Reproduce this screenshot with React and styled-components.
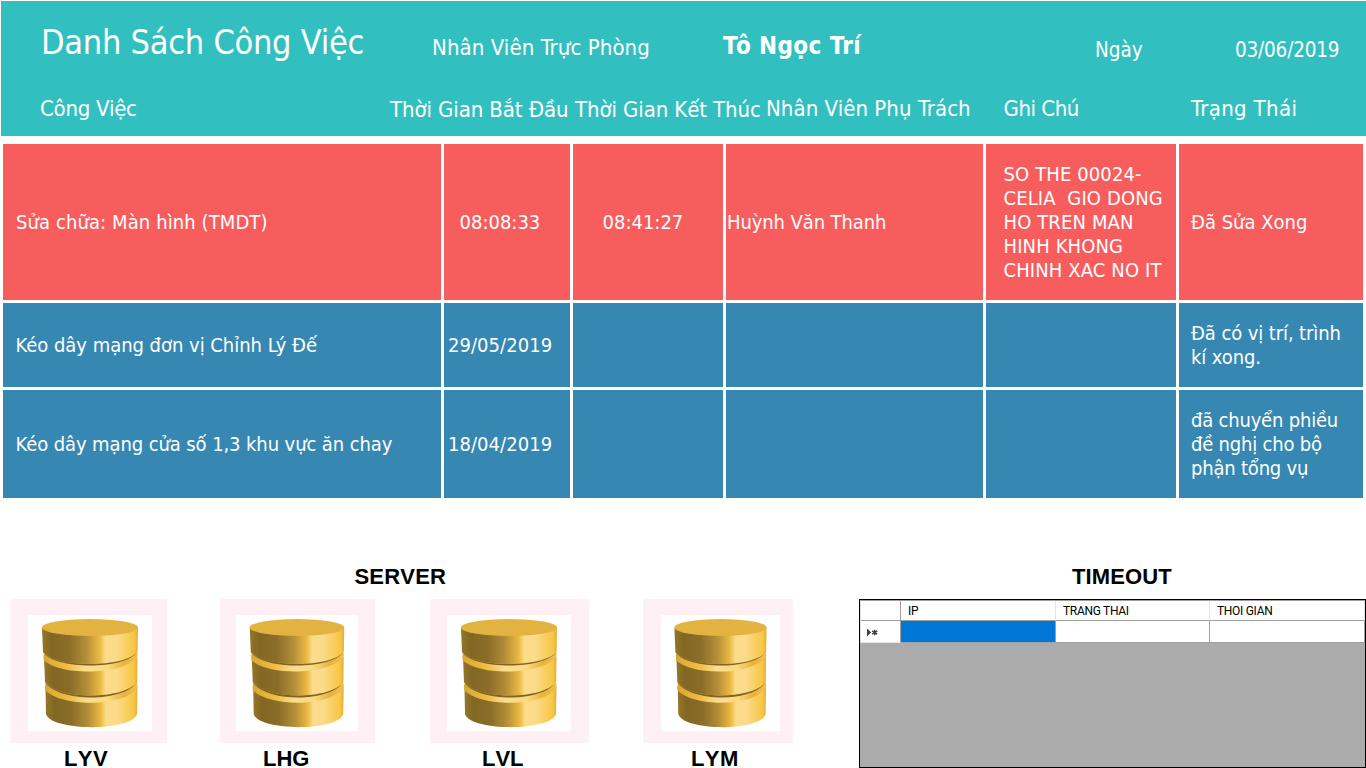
import React from "react";
import styled, { createGlobalStyle } from "styled-components";

const GlobalStyle = createGlobalStyle`
  * { box-sizing: border-box; }
  body { margin: 0; background: #fff; overflow: hidden; }
`;

const Page = styled.div`
  width: 1366px;
  height: 768px;
  padding-top: 1px;
  display: flex;
  flex-direction: column;
  font-family: "DejaVu Sans Condensed", "DejaVu Sans", sans-serif;
  font-stretch: condensed;
`;

const Header = styled.header`
  flex: none;
  height: 135px;
  margin-left: 1px;
  background: #32bfc0;
  color: #fff;
`;

const TitleRow = styled.div`
  display: grid;
  grid-template-columns: 391px 291px 372px 140px 1fr;
  padding-left: 40px;
  height: 88px;
`;

const ColumnRow = styled.div`
  display: grid;
  grid-template-columns: 350px 185px 191px 237.5px 187.5px 1fr;
  padding-left: 39px;
  height: 47px;
`;

const HeaderText = styled.div`
  padding-top: ${(p) => p.$top || 0}px;
  font-size: ${(p) => p.$size || 22}px;
  font-weight: ${(p) => (p.$bold ? 700 : 400)};
  letter-spacing: ${(p) => p.$track || 0}px;
  line-height: 40px;
  white-space: nowrap;
`;

const JobGrid = styled.div`
  flex: none;
  display: grid;
  grid-template-columns: 438px 126px 150px 257px 190px 184px;
  grid-template-rows: 156px 84px 108px;
  gap: 3px;
  margin: 8px 3px 0;
`;

const Cell = styled.div`
  display: flex;
  align-items: center;
  padding-left: ${(p) => p.$pad || 0}px;
  background: ${(p) => (p.$done ? "#f85d5e" : "#3787b3")};
  color: #fff;
  font-size: 20px;
  line-height: 24px;
  letter-spacing: ${(p) => p.$track || 0}px;
  white-space: pre;
`;

const Bottom = styled.div`
  display: flex;
  padding-top: 67px;
  font-family: "Liberation Sans", Arial, sans-serif;
`;

const ServerSection = styled.section`
  width: 859px;
  flex: none;
`;

const SectionTitle = styled.h2`
  margin: 0 0 10px;
  padding-left: ${(p) => p.$pad}px;
  font-size: 22px;
  font-weight: 700;
  line-height: 24px;
  letter-spacing: ${(p) => p.$track || 0}px;
  font-kerning: none;
  color: #000;
`;

const ServerList = styled.div`
  display: grid;
  grid-template-columns: 210px 210px 213px 150px;
  padding-left: 10px;
`;

const Tile = styled.div`
  width: ${(p) => p.$width}px;
  height: 144px;
  padding: 16px ${(p) => p.$right}px 12px ${(p) => p.$left}px;
  background: #fff0f5;
`;

const DatabaseArt = styled.svg`
  display: block;
  width: 100%;
  height: 116px;
  background: #fff;
`;

const ServerName = styled.div`
  margin-top: 6px;
  padding-left: ${(p) => p.$pad}px;
  font-size: 22px;
  font-weight: 700;
  line-height: 19px;
  letter-spacing: ${(p) => p.$track || 0}px;
  font-kerning: none;
`;

const TimeoutSection = styled.section`
  flex: none;
  width: 507px;
`;

const TimeoutPanel = styled.div`
  height: 169px;
  border: 1px solid #000;
  background: #ababab;
`;

const TimeoutGrid = styled.div`
  display: grid;
  grid-template-columns: 40px 155px 154px 155px;
  grid-template-rows: 20px 22px;
  border-top: 1px solid #a0a0a0;
  border-left: 1px solid #dcdcdc;
`;

const TimeoutHead = styled.div`
  background: #fff;
  border-right: 1px solid ${(p) => (p.$dark ? "#a0a0a0" : "#e5e5e5")};
  border-bottom: 1px solid #a0a0a0;
  padding: 1px 0 0 7px;
  font: 400 12px/18px Roboto, sans-serif;
  letter-spacing: -0.3px;
  color: #000;
`;

const TimeoutCell = styled.div`
  display: flex;
  align-items: center;
  padding-left: 6px;
  background: ${(p) => (p.$selected ? "#0078d7" : "#fff")};
  border-right: 1px solid #a0a0a0;
  border-bottom: 1px solid ${(p) => (p.$rowHead ? "#e5e5e5" : "#a0a0a0")};
`;

const RowMarker = styled.svg`
  display: block;
  margin-top: 2px;
`;

function DatabaseIcon({ id }) {
  const body = `url(#body-${id})`;
  const lip = `url(#lip-${id})`;
  return (
    <DatabaseArt viewBox="0 0 124 116" preserveAspectRatio="none">
      <defs>
        <linearGradient id={`body-${id}`} x1="0" x2="1">
          <stop offset="0" stopColor="#957628" />
          <stop offset="0.1" stopColor="#826723" />
          <stop offset="0.28" stopColor="#8a6d29" />
          <stop offset="0.46" stopColor="#b48e38" />
          <stop offset="0.6" stopColor="#eab942" />
          <stop offset="0.66" stopColor="#fbdc8a" />
          <stop offset="0.77" stopColor="#fbdb8c" />
          <stop offset="0.96" stopColor="#f8c644" />
          <stop offset="1" stopColor="#e0ae3c" />
        </linearGradient>
        <linearGradient id={`lip-${id}`} x1="0" x2="1">
          <stop offset="0" stopColor="#d9a636" />
          <stop offset="0.25" stopColor="#f0bc42" />
          <stop offset="0.45" stopColor="#fbdd8f" />
          <stop offset="0.68" stopColor="#fbd980" />
          <stop offset="0.85" stopColor="#e6b23d" />
          <stop offset="1" stopColor="#f2c04a" />
        </linearGradient>
      </defs>
      <path d="M17.5 72 L109.5 72 L109 99 C104 116.5 23 116.5 18 99 Z" fill={body} />
      <path d="M17 74 Q16.5 68.5 18.5 68.5 C33 83 95 83 108 67 Q110 67.5 109.5 72 C98 92.5 33 92.5 17 75 Z" fill={lip} />
      <path d="M16 42 L109.5 42 L109.2 67 C96 85 31 85 17 67 Z" fill={body} />
      <path d="M17 67 C31 85 96 85 109.2 67 C96 87.5 31 87.5 17 67.5 Z" fill="#80641f" />
      <path d="M15.6 44 Q15 38.5 17 38.5 C32 52 94 51 108 37 Q110 37.5 109.8 41 C96 61 31 61 15.6 45 Z" fill={lip} />
      <path d="M14 13 L110 13 L109.6 37 C96 53 29 53 15 37 Z" fill={body} />
      <path d="M15 37 C29 53 96 53 109.6 37 C96 55 29 55 15 37.5 Z" fill="#80641f" />
      <ellipse cx="62" cy="12.5" rx="48.2" ry="8.5" fill="#e2b340" />
    </DatabaseArt>
  );
}

const jobs = [
  {
    done: true,
    cells: [
      { text: "Sửa chữa: Màn hình (TMDT)", pad: 13, track: 0.1 },
      { text: "08:08:33", pad: 15.5 },
      { text: "08:41:27", pad: 29.5 },
      { text: "Huỳnh Văn Thanh", pad: 1, track: -0.1 },
      { text: "SO THE 00024-\nCELIA  GIO DONG\nHO TREN MAN\nHINH KHONG\nCHINH XAC NO IT", pad: 17.5, track: 0.12 },
      { text: "Đã Sửa Xong", pad: 12 },
    ],
  },
  {
    cells: [
      { text: "Kéo dây mạng đơn vị Chỉnh Lý Đế", pad: 12.5, track: -0.03 },
      { text: "29/05/2019", pad: 4, track: 0.05 },
      {},
      {},
      {},
      { text: "Đã có vị trí, trình\nkí xong.", pad: 12, track: -0.1 },
    ],
  },
  {
    cells: [
      { text: "Kéo dây mạng cửa số 1,3 khu vực ăn chay", pad: 12.5, track: -0.1 },
      { text: "18/04/2019", pad: 4, track: 0.05 },
      {},
      {},
      {},
      { text: "đã chuyển phiều\nđề nghị cho bộ\nphận tổng vụ", pad: 12, track: -0.2 },
    ],
  },
];

const servers = [
  { name: "LYV", width: 157, left: 18, right: 15, pad: 54, track: 0.4 },
  { name: "LHG", width: 155, left: 16, right: 17, pad: 43 },
  { name: "LVL", width: 159, left: 17, right: 18, pad: 52 },
  { name: "LYM", width: 150, left: 18, right: 13, pad: 48, track: 0.4 },
];

export default function App() {
  return (
    <Page>
      <GlobalStyle />
      <Header>
        <TitleRow>
          <HeaderText $size={34} $top={21} $track={-0.25}>Danh Sách Công Việc</HeaderText>
          <HeaderText $top={27} $track={0.08}>Nhân Viên Trực Phòng</HeaderText>
          <HeaderText $size={24} $bold $top={25} $track={0.4}>Tô Ngọc Trí</HeaderText>
          <HeaderText $size={20.5} $top={29}>Ngày</HeaderText>
          <HeaderText $size={20.5} $top={29} $track={-0.2}>03/06/2019</HeaderText>
        </TitleRow>
        <ColumnRow>
          <HeaderText $track={-0.25}>Công Việc</HeaderText>
          <HeaderText $top={1} $track={-0.1}>Thời Gian Bắt Đầu</HeaderText>
          <HeaderText $top={1} $track={-0.1}>Thời Gian Kết Thúc</HeaderText>
          <HeaderText $track={0.05}>Nhân Viên Phụ Trách</HeaderText>
          <HeaderText $track={-0.45}>Ghi Chú</HeaderText>
          <HeaderText $track={0.35}>Trạng Thái</HeaderText>
        </ColumnRow>
      </Header>
      <JobGrid>
        {jobs.map((job, r) =>
          job.cells.map((c, i) => (
            <Cell key={`${r}-${i}`} $done={job.done} $pad={c.pad} $track={c.track}>
              {c.text}
            </Cell>
          ))
        )}
      </JobGrid>
      <Bottom>
        <ServerSection>
          <SectionTitle $pad={354.5} $track={0.2}>SERVER</SectionTitle>
          <ServerList>
            {servers.map((s) => (
              <div key={s.name}>
                <Tile $width={s.width} $left={s.left} $right={s.right}>
                  <DatabaseIcon id={s.name} />
                </Tile>
                <ServerName $pad={s.pad} $track={s.track}>{s.name}</ServerName>
              </div>
            ))}
          </ServerList>
        </ServerSection>
        <TimeoutSection>
          <SectionTitle $pad={213} $track={0.1}>TIMEOUT</SectionTitle>
          <TimeoutPanel>
            <TimeoutGrid>
              <TimeoutHead $dark />
              <TimeoutHead>IP</TimeoutHead>
              <TimeoutHead>TRANG THAI</TimeoutHead>
              <TimeoutHead>THOI GIAN</TimeoutHead>
              <TimeoutCell $rowHead>
                <RowMarker width="11" height="9" viewBox="0 0 11 9">
                  <path d="M0 0.5 L4.2 4.5 L0 8.5 Z" fill="#404040" />
                  <path d="M7.7 1.8 V7.2 M5.2 3 L10.2 6 M10.2 3 L5.2 6" stroke="#404040" strokeWidth="1.5" />
                </RowMarker>
              </TimeoutCell>
              <TimeoutCell $selected />
              <TimeoutCell />
              <TimeoutCell />
            </TimeoutGrid>
          </TimeoutPanel>
        </TimeoutSection>
      </Bottom>
    </Page>
  );
}
